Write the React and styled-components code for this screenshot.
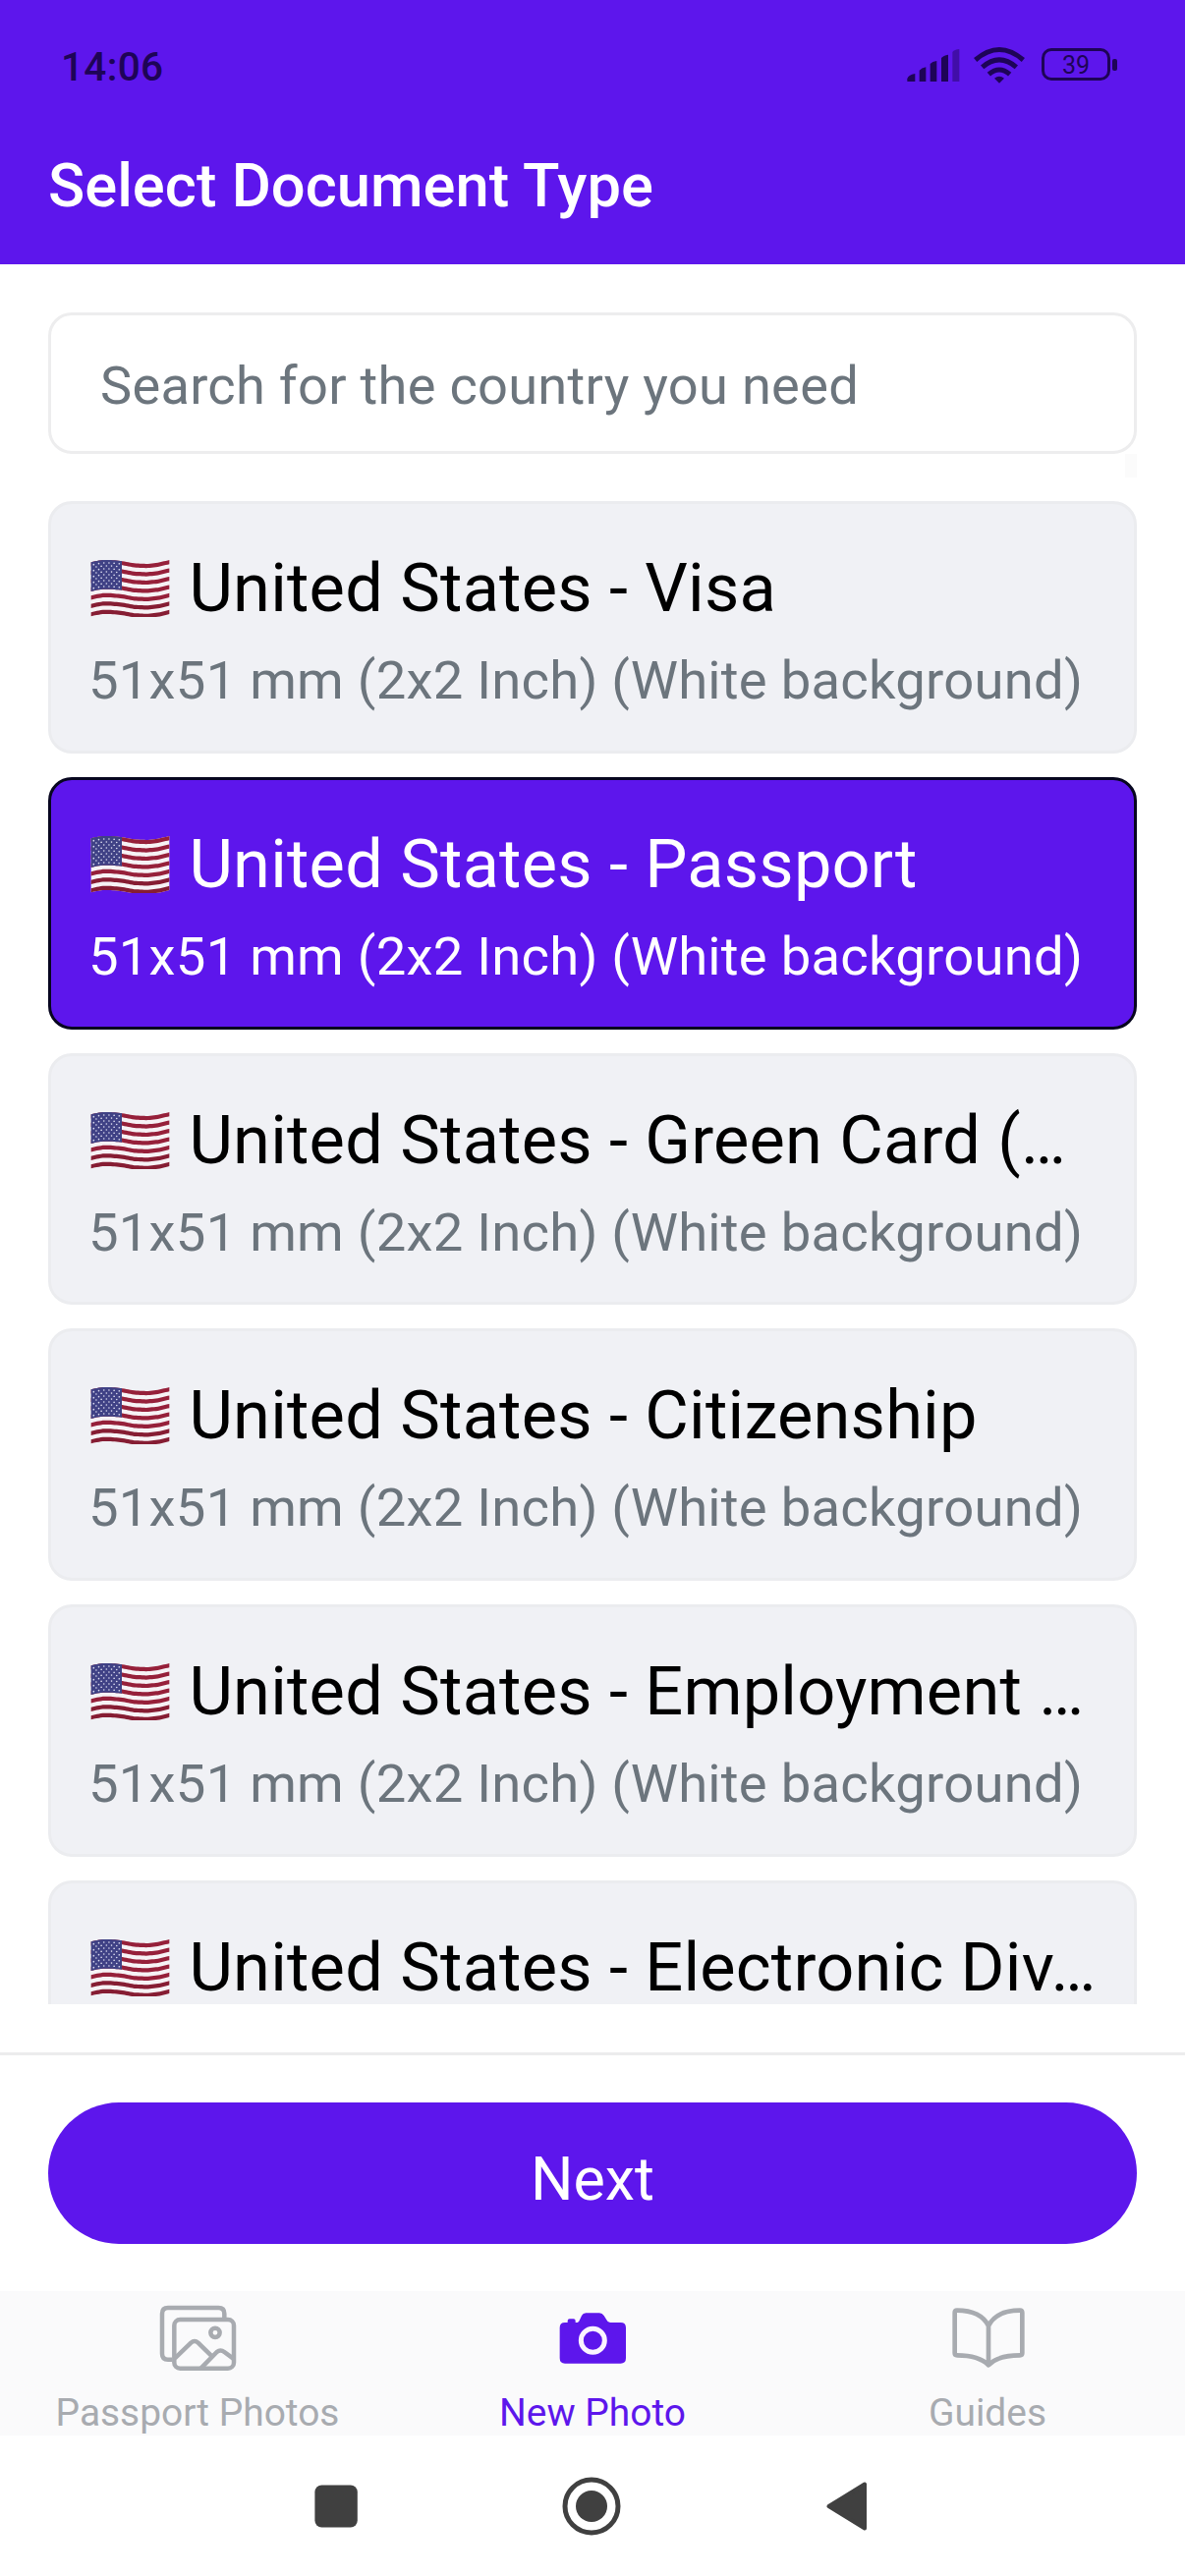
import React from "react";
import styled, { createGlobalStyle } from "styled-components";

const PURPLE = "#5d16ec";
const INK = "#1e0457";

const GlobalStyle = createGlobalStyle`
  * { box-sizing: border-box; }
  body { margin: 0; background: #fff; font-family: Roboto, "Liberation Sans", sans-serif; }
`;

const Screen = styled.div`
  display: flex;
  flex-direction: column;
  width: 1206px;
  height: 2622px;
  background: #fff;
  overflow: hidden;
`;

const Header = styled.header`
  height: 269px;
  background: ${PURPLE};
  color: #fff;
`;

const StatusBar = styled.div`
  display: flex;
  align-items: center;
  justify-content: space-between;
  height: 136px;
  padding: 0 69px 0 62px;
  color: ${INK};
`;

const Clock = styled.span`
  font-size: 40.6px;
  font-weight: 500;
  letter-spacing: 0.3px;
`;

const StatusIcons = styled.div`
  display: flex;
  align-items: center;
  padding-bottom: 5px;
`;

const SignalIcon = styled.svg`
  width: 54px;
  height: 38px;
  margin-right: 14px;
`;

const WifiSvg = styled.svg`
  width: 52px;
  height: 38px;
  margin-right: 17px;
`;

const Battery = styled.div`
  display: flex;
  align-items: center;
  justify-content: center;
  width: 70px;
  height: 33px;
  padding-top: 2px;
  border: 3.5px solid ${INK};
  border-radius: 10px;
  font-size: 25px;
  line-height: 25px;
`;

const BatteryNub = styled.div`
  width: 5px;
  height: 12px;
  margin-left: 2px;
  border-radius: 2px;
  background: ${INK};
`;

const PageTitle = styled.h1`
  margin: 0;
  padding: 17px 49px 0;
  font-size: 61.5px;
  line-height: 72px;
  font-weight: 500;
`;

const Body = styled.main`
  display: flex;
  flex-direction: column;
  height: 1820px;
  padding: 49px 49px 0;
`;

const SearchField = styled.div`
  display: flex;
  align-items: center;
  flex: none;
  height: 144px;
  padding: 4px 50px 0;
  border: 3px solid #ededee;
  border-radius: 24px;
  color: #6c757d;
  font-size: 54.2px;
  letter-spacing: 0.28px;
`;

const ScrollGap = styled.div`
  display: flex;
  justify-content: flex-end;
  flex: none;
  height: 48px;
`;

const ScrollHint = styled.div`
  width: 12px;
  height: 24px;
  background: #fbfbfb;
`;

const List = styled.div`
  display: flex;
  flex-direction: column;
  gap: 24px;
  height: 1530px;
  overflow: hidden;
`;

const Card = styled.div`
  flex: none;
  height: 256.75px;
  padding: 46px 38px 0;
  border: 3px solid ${(p) => (p.$selected ? "#07061f" : "#ebecef")};
  border-radius: 24px;
  background: ${(p) => (p.$selected ? PURPLE : "#f0f1f5")};
  color: ${(p) => (p.$selected ? "#fff" : "#000")};
`;

const CardTitle = styled.div`
  display: flex;
  align-items: center;
  gap: 18.5px;
  font-size: 68.5px;
  line-height: 80px;
  letter-spacing: 0.2px;
  white-space: nowrap;
`;

const FlagSvg = styled.svg`
  flex: none;
  width: 84px;
  height: 60px;
  margin-bottom: 2px;
`;

const CardNote = styled.div`
  margin-top: 22px;
  font-size: 54.4px;
  line-height: 64px;
  letter-spacing: 0.24px;
  white-space: nowrap;
  color: ${(p) => (p.$selected ? "#fff" : "#6c757d")};
`;

const Footer = styled.div`
  height: 243px;
  padding: 48px 49px 0;
  border-top: 3px solid #ececed;
`;

const NextButton = styled.button`
  display: flex;
  align-items: center;
  justify-content: center;
  width: 100%;
  height: 144px;
  padding: 11px 0 0;
  border: 0;
  border-radius: 72px;
  background: ${PURPLE};
  color: #fff;
  font-family: inherit;
  font-size: 61px;
`;

const TabBar = styled.nav`
  display: flex;
  height: 147px;
  background: #fafafb;
`;

const Tab = styled.div`
  display: flex;
  flex: 1;
  flex-direction: column;
  align-items: center;
  padding-top: 3px;
  color: ${(p) => (p.$active ? PURPLE : "#a8abb0")};
  font-size: 38.9px;
  line-height: 46px;
`;

const TabSvg = styled.svg`
  width: 110px;
  height: 90px;
  margin-bottom: 8px;
`;

const SystemNav = styled.div`
  display: flex;
  align-items: center;
  justify-content: center;
  gap: 200px;
  height: 143px;
  padding: 0 2px 0 0;
`;

const NavSvg = styled.svg`
  width: 60px;
  height: 60px;
`;

const WAVE = [[69, 0], [85, -4], [105, -7], [130, -7], [163, -4], [200, 3], [240, 5], [275, 1], [308, -7]];
const waveAt = (x) => {
  for (let i = 1; i < WAVE.length; i++) {
    const [x0, y0] = WAVE[i - 1];
    const [x1, y1] = WAVE[i];
    if (x <= x1) return y0 + ((y1 - y0) * (x - x0)) / (x1 - x0);
  }
  return WAVE[WAVE.length - 1][1];
};
const ribbon = (left, right, top, height) => {
  const xs = [];
  for (let x = left; x < right; x += 6) xs.push(x);
  xs.push(right);
  const upper = xs.map((x) => `${x},${top + waveAt(x)}`);
  const lower = xs.reverse().map((x) => `${x},${top + height + waveAt(x)}`);
  return upper.concat(lower).join(" ");
};
const STRIPE = 12.7;
const STARS = [];
for (let row = 0; row < 9; row++) {
  const count = row % 2 ? 5 : 6;
  for (let i = 0; i < count; i++) {
    const x = 77 + i * 15.6 + (row % 2 ? 7.8 : 0);
    STARS.push([x, 106 + row * 9 + waveAt(x)]);
  }
}

const Flag = () => (
  <FlagSvg viewBox="62 84 250 180">
    <polygon points={ribbon(69, 308, 97, STRIPE * 13)} fill="#f6f2f5" />
    {[0, 2, 4, 6, 8, 10, 12].map((n) => (
      <polygon key={n} points={ribbon(69, 308, 97 + n * STRIPE, STRIPE)} fill={n > 8 ? "#861d33" : "#96203a"} />
    ))}
    <polygon points={ribbon(69, 163, 97, STRIPE * 7)} fill="#3f4185" />
    {STARS.map(([x, y], i) => (
      <circle key={i} cx={x} cy={y} r="2.5" fill="#dcdcf0" />
    ))}
  </FlagSvg>
);

const Signal = () => (
  <SignalIcon viewBox="0 0 162 114" fill={INK}>
    <path d="M1 108 V100 Q3 88 25 84 V108 Z" />
    <path d="M38 108 V74 Q44 66 58 64 V108 Z" />
    <path d="M71 108 V54 Q77 47 91 45 V108 Z" />
    <path d="M105 108 V36 Q111 28 126 26 V108 Z" />
    <path d="M139 108 V18 Q145 10 160 9 V108 Z" opacity="0.45" />
  </SignalIcon>
);

const Wifi = () => (
  <WifiSvg viewBox="0 0 156 114" fill="none" stroke={INK} strokeWidth="15">
    <path d="M5 42 Q78 -21 151 42" />
    <path d="M26 64 Q78 19 130 64" />
    <path d="M46 86 Q78 58 110 86" />
    <path d="M63 98 Q78 86 93 98 L78 113 Z" fill={INK} stroke="none" />
  </WifiSvg>
);

const PhotosIcon = () => (
  <TabSvg viewBox="-12 0 330 270" fill="none" stroke="currentColor" strokeWidth="13.5" strokeLinejoin="round">
    <path d="M235 76 V60 Q235 42 217 42 H63 Q45 42 45 60 V182 Q45 200 63 200 H76" />
    <rect x="82" y="78" width="182" height="149" rx="18" />
    <circle cx="207" cy="118" r="14" />
    <path d="M84 196 L133 149 Q144 139 155 149 L197 190" />
    <path d="M164 226 L212 177 Q223 168 235 177 L262 197" />
  </TabSvg>
);

const CameraIcon = () => (
  <TabSvg viewBox="-21 0 330 270" fill="currentColor">
    <path d="M60 87 H68 V82 Q68 76 74 76 H86 Q92 76 92 82 V87 H98 Q103 85 105 79 L111 66 Q115 58 124 58 H165 Q174 58 179 66 L187 79 Q190 87 198 87 H230 Q246 87 246 103 V196 Q246 212 230 212 H60 Q44 212 44 196 V103 Q44 87 60 87 Z" />
    <circle cx="145" cy="142" r="36" fill="none" stroke="#fbf3ff" strokeWidth="15" />
  </TabSvg>
);

const BookIcon = () => (
  <TabSvg viewBox="0 0 330 270" fill="none" stroke="currentColor" strokeWidth="14" strokeLinejoin="round">
    <path d="M168 97 C150 62 110 50 72 50 Q65 50 65 57 V180 Q65 187 72 187 C112 187 145 193 168 217 C191 193 224 187 264 187 Q271 187 271 180 V57 Q271 50 264 50 C226 50 186 62 168 97 V217" />
  </TabSvg>
);

const DOCUMENTS = [
  { title: "United States - Visa" },
  { title: "United States - Passport", selected: true },
  { title: "United States - Green Card (…" },
  { title: "United States - Citizenship" },
  { title: "United States - Employment …" },
  { title: "United States - Electronic Div…" },
];

export default function App() {
  return (
    <Screen>
      <GlobalStyle />
      <Header>
        <StatusBar>
          <Clock>14:06</Clock>
          <StatusIcons>
            <Signal />
            <Wifi />
            <Battery>39</Battery>
            <BatteryNub />
          </StatusIcons>
        </StatusBar>
        <PageTitle>Select Document Type</PageTitle>
      </Header>
      <Body>
        <SearchField>Search for the country you need</SearchField>
        <ScrollGap><ScrollHint /></ScrollGap>
        <List>
          {DOCUMENTS.map((doc) => (
            <Card key={doc.title} $selected={doc.selected}>
              <CardTitle><Flag /><span>{doc.title}</span></CardTitle>
              <CardNote $selected={doc.selected}>51x51 mm (2x2 Inch) (White background)</CardNote>
            </Card>
          ))}
        </List>
      </Body>
      <Footer>
        <NextButton>Next</NextButton>
      </Footer>
      <TabBar>
        <Tab><PhotosIcon /><span>Passport Photos</span></Tab>
        <Tab $active><CameraIcon /><span>New Photo</span></Tab>
        <Tab><BookIcon /><span>Guides</span></Tab>
      </TabBar>
      <SystemNav>
        <NavSvg viewBox="0 0 60 60" fill="#404040"><rect x="8.4" y="8.5" width="43.4" height="43" rx="7" /></NavSvg>
        <NavSvg viewBox="0 0 60 60" fill="#404040">
          <circle cx="30" cy="30" r="27" fill="none" stroke="#404040" strokeWidth="5" />
          <circle cx="30" cy="30" r="16" />
        </NavSvg>
        <NavSvg viewBox="0 0 60 60" fill="#404040" stroke="#404040" strokeWidth="4" strokeLinejoin="round">
          <path d="M11.5 30 L48 7.5 V52.5 Z" />
        </NavSvg>
      </SystemNav>
    </Screen>
  );
}
